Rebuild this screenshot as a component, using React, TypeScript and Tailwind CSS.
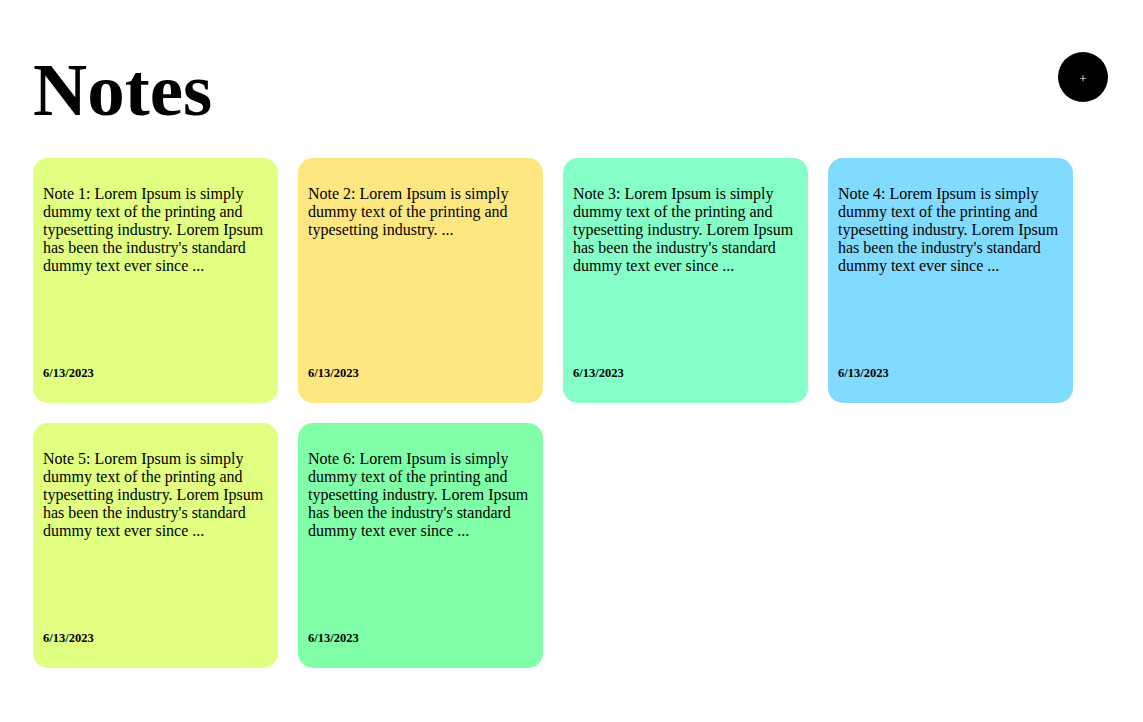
import React from "react";

const text =
  "Lorem Ipsum is simply dummy text of the printing and typesetting industry. Lorem Ipsum has been the industry's standard dummy text ever since ...";

const notes = [
  { id: 1, body: text, bg: "bg-[#e1ff80]" },
  { id: 2, body: "Lorem Ipsum is simply dummy text of the printing and typesetting industry. ...", bg: "bg-[#fee680]" },
  { id: 3, body: text, bg: "bg-[#85ffc7]" },
  { id: 4, body: text, bg: "bg-[#80dbff]" },
  { id: 5, body: text, bg: "bg-[#e1ff80]" },
  { id: 6, body: text, bg: "bg-[#80ffa8]" },
];

export default function App() {
  return (
    <div className="min-h-screen bg-white text-black font-['Liberation_Serif','Times_New_Roman',serif] px-[33px] pt-[48px] pb-10">
      <div className="flex justify-between items-start">
        <h1 className="text-[75px] font-bold leading-[83px]">Notes</h1>
        <button className="mt-[4px] mr-[2px] w-[50px] h-[50px] rounded-full bg-black text-white text-[13px] leading-none pt-[2px] flex items-center justify-center">
          +
        </button>
      </div>

      {/* notes grid */}
      <div className="mt-[27px] grid grid-cols-[repeat(4,245px)] gap-[20px]">
        {notes.map((note) => (
          <div
            key={note.id}
            className={`${note.bg} h-[245px] rounded-[15px] p-[10px] flex flex-col justify-between`}
          >
            <p className="mt-[17px] text-[16px] leading-[18px]">
              Note {note.id}: {note.body}
            </p>
            <p className="mb-[13px] text-[12.5px] leading-[14px] font-bold">6/13/2023</p>
          </div>
        ))}
      </div>
    </div>
  );
}
